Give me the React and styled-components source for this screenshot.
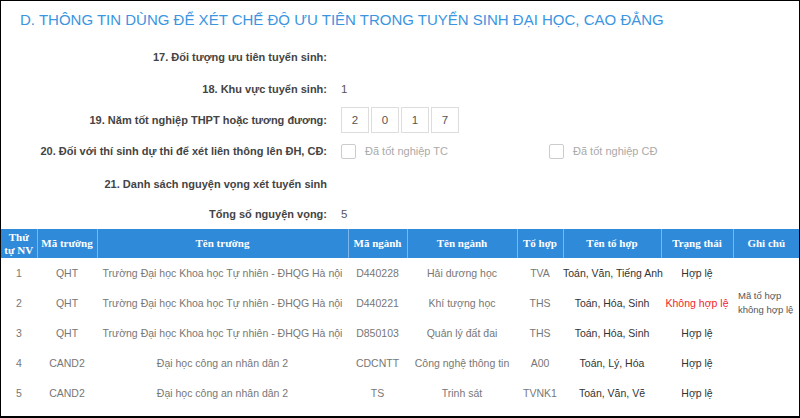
import styled, { createGlobalStyle } from "styled-components";

const Global = createGlobalStyle`
  body { margin: 0; background: #000; font-family: Arial, "Liberation Sans", sans-serif; }
`;

const Frame = styled.div`
  margin: 1px 1px 0 1px;
  height: 415px;
  background: #fff;
  overflow: hidden;
`;

const Title = styled.h2`
  margin: 0;
  padding: 10px 0 0 19px;
  height: 31px;
  box-sizing: border-box;
  font-size: 15px;
  font-weight: normal;
  color: #3b95df;
`;

const Form = styled.div`
  display: flex;
  flex-direction: column;
  padding-top: 10px;
`;

const Row = styled.div`
  display: grid;
  grid-template-columns: 326px 1fr;
  column-gap: 14px;
  align-items: center;
  height: ${(p) => p.h || 30}px;
`;

const Label = styled.div`
  text-align: right;
  font-size: 11px;
  font-weight: bold;
  color: #444;
`;

const Value = styled.div`
  font-size: 11.5px;
  color: #555;
  display: flex;
  align-items: center;
`;

const Digit = styled.span`
  width: 26px;
  height: 24px;
  border: 1px solid #ddd;
  margin-right: 2px;
  display: flex;
  align-items: center;
  justify-content: center;
  color: #555;
`;

const Check = styled.label`
  display: flex;
  align-items: center;
  gap: 9px;
  color: #aaa;
  font-size: 11px;
  width: ${(p) => p.w}px;
  &::before {
    content: "";
    width: 13px;
    height: 13px;
    border: 1px solid #ccc;
    border-radius: 2px;
  }
`;

const Table = styled.table`
  width: 100%;
  border-collapse: collapse;
  table-layout: fixed;
  margin-top: 1px;
`;

const Th = styled.th`
  background: #2f8ad9;
  color: #fff;
  font-family: "Liberation Serif", "Times New Roman", serif;
  font-size: 11px;
  font-weight: bold;
  height: 29px;
  padding: 0 2px;
  border-left: 1px solid #7db6ea;
  line-height: 13px;
  &:first-child { border-left: none; }
`;

const Td = styled.td`
  text-align: center;
  font-size: 10.5px;
  white-space: nowrap;
  height: 30px;
  padding: 0;
  color: ${(p) => (p.red ? "#f0252d" : p.dark ? "#333" : "#777")};
  font-weight: ${(p) => (p.red || p.dark ? "500" : "normal")};
`;

const Note = styled.div`
  font-size: 9.5px;
  color: #555;
  text-align: left;
  white-space: normal;
  padding-left: 5px;
  line-height: 14px;
`;

const rows = [
  ["1", "QHT", "Trường Đại học Khoa học Tự nhiên - ĐHQG Hà nội", "D440228", "Hải dương học", "TVA", "Toán, Văn, Tiếng Anh", "Hợp lệ", ""],
  ["2", "QHT", "Trường Đại học Khoa học Tự nhiên - ĐHQG Hà nội", "D440221", "Khí tượng học", "THS", "Toán, Hóa, Sinh", "Không hợp lệ", "Mã tổ hợp không hợp lệ"],
  ["3", "QHT", "Trường Đại học Khoa học Tự nhiên - ĐHQG Hà nội", "D850103", "Quản lý đất đai", "THS", "Toán, Hóa, Sinh", "Hợp lệ", ""],
  ["4", "CAND2", "Đại học công an nhân dân 2", "CDCNTT", "Công nghệ thông tin", "A00", "Toán, Lý, Hóa", "Hợp lệ", ""],
  ["5", "CAND2", "Đại học công an nhân dân 2", "TS", "Trinh sát", "TVNK1", "Toán, Văn, Vẽ", "Hợp lệ", ""],
];

const widths = [36, 60, 251, 59, 110, 46, 98, 72, 66];
const heads = ["Thứ tự NV", "Mã trường", "Tên trường", "Mã ngành", "Tên ngành", "Tổ hợp", "Tên tổ hợp", "Trạng thái", "Ghi chú"];

export default function App() {
  return (
    <>
      <Global />
      <Frame>
        <Title>D. THÔNG TIN DÙNG ĐỂ XÉT CHẾ ĐỘ ƯU TIÊN TRONG TUYỂN SINH ĐẠI HỌC, CAO ĐẲNG</Title>
        <Form>
          <Row><Label>17. Đối tượng ưu tiên tuyển sinh:</Label><Value /></Row>
          <Row h={33}><Label>18. Khu vực tuyển sinh:</Label><Value>1</Value></Row>
          <Row><Label>19. Năm tốt nghiệp THPT hoặc tương đương:</Label>
            <Value>{["2", "0", "1", "7"].map((d, i) => <Digit key={i}>{d}</Digit>)}</Value>
          </Row>
          <Row h={32}><Label>20. Đối với thí sinh dự thi để xét liên thông lên ĐH, CĐ:</Label>
            <Value><Check w={208}>Đã tốt nghiệp TC</Check><Check>Đã tốt nghiệp CĐ</Check></Value>
          </Row>
          <Row h={33}><Label>21. Danh sách nguyện vọng xét tuyển sinh</Label><Value /></Row>
          <Row h={28}><Label>Tổng số nguyện vọng:</Label><Value>5</Value></Row>
        </Form>
        <Table>
          <colgroup>{widths.map((w, i) => <col key={i} style={{ width: w }} />)}</colgroup>
          <thead>
            <tr>{heads.map((h) => <Th key={h}>{h}</Th>)}</tr>
          </thead>
          <tbody>
            {rows.map((r) => (
              <tr key={r[0]}>
                {r.slice(0, 6).map((c, i) => <Td key={i}>{c}</Td>)}
                <Td dark>{r[6]}</Td>
                <Td dark red={r[7] !== "Hợp lệ"}>{r[7]}</Td>
                <Td>{r[8] && <Note>{r[8]}</Note>}</Td>
              </tr>
            ))}
          </tbody>
        </Table>
      </Frame>
    </>
  );
}
